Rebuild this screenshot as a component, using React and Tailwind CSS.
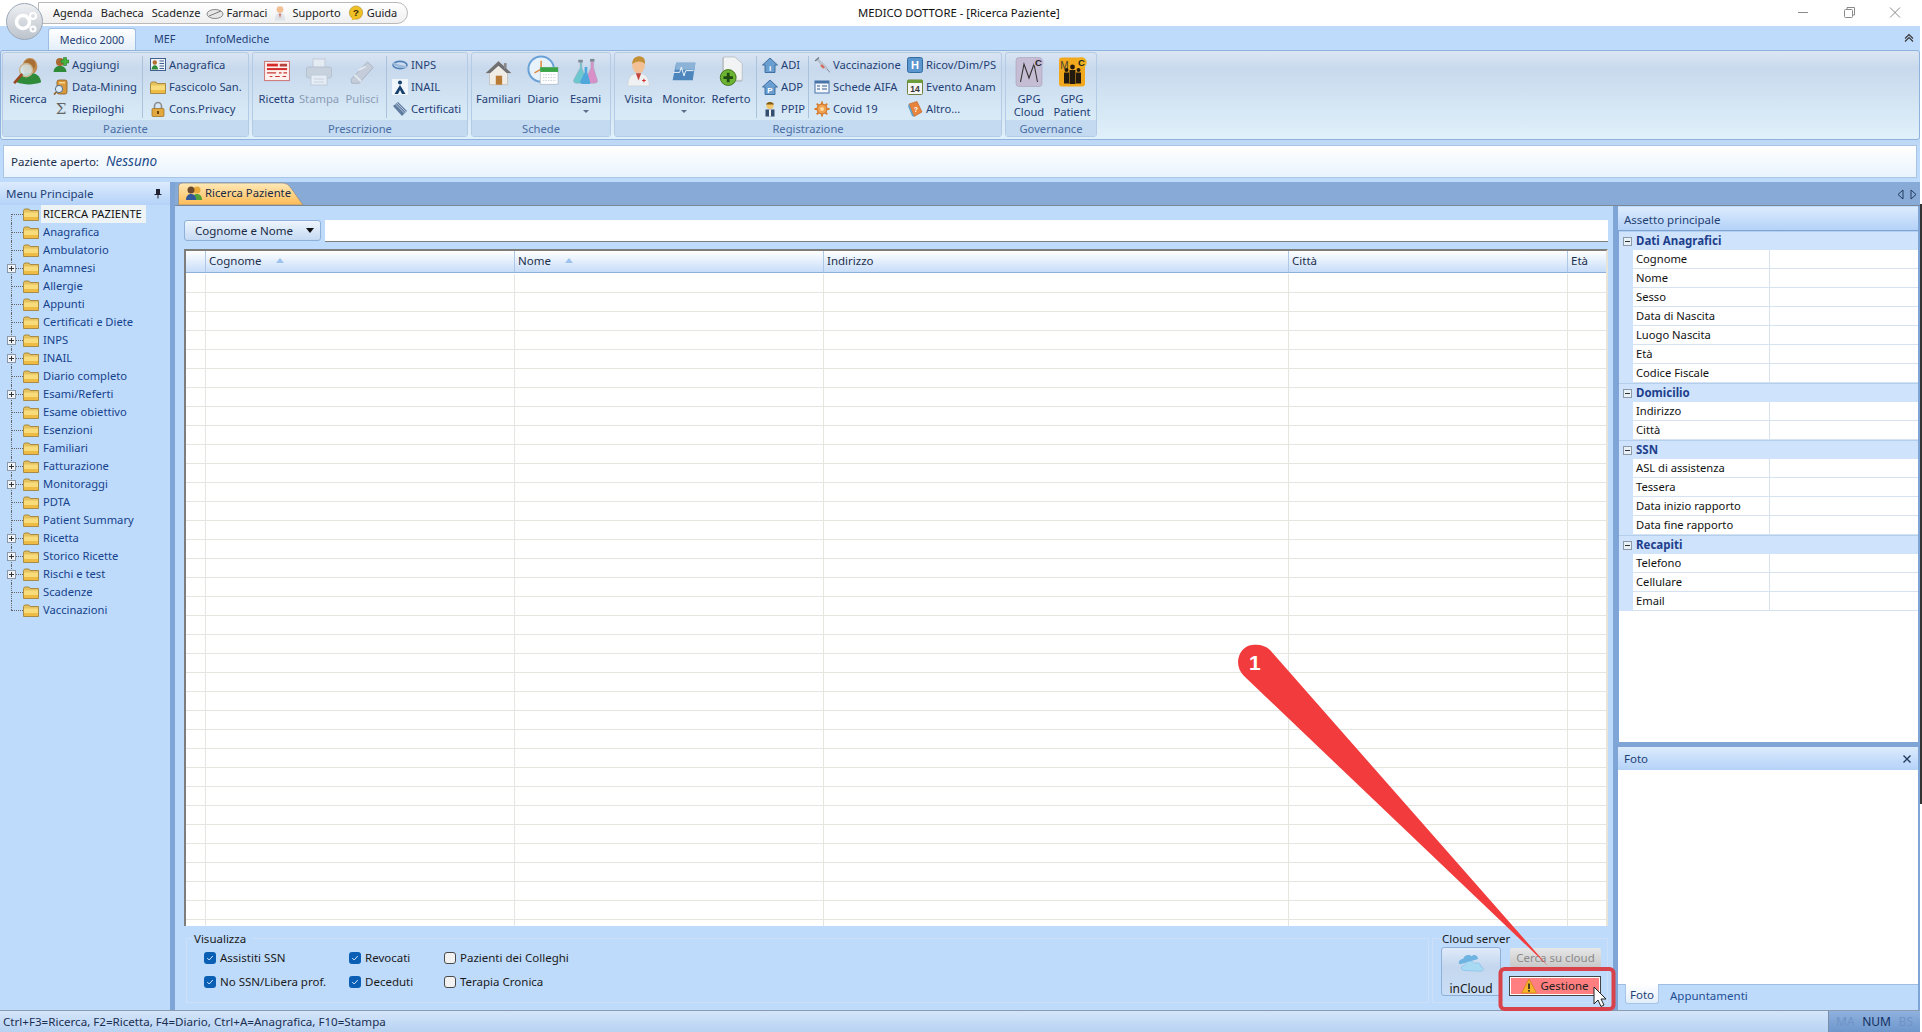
import React from "react";

const S = ({ w = 16, h = 16, vb, children, className = "" }) => (
  <svg width={w} height={h} viewBox={vb || `0 0 ${w} ${h}`} className={`shrink-0 ${className}`}>{children}</svg>
);

const Folder = ({ w = 16, h = 13 }) => (
  <S w={w} h={h} vb="0 0 16 13">
    <path d="M0.5 2.5 L1.5 1 H6 L7 2.5 H15.5 V12.5 H0.5 Z" fill="#e6c25e" stroke="#9c7a2c" strokeWidth="0.8" />
    <path d="M1 4.5 H15 V12 H1 Z" fill="#f8dc7c" />
    <path d="M1 9 H15 V12 H1 Z" fill="#eebc45" />
  </S>
);

const PersonHead = ({ c = "#a96b32", b = "#2f8a3a", x = 0 }) => (
  <g transform={`translate(${x} 0)`}>
    <circle cx="7" cy="5" r="4" fill={c} />
    <path d="M0.5 15 C1 10 4 9 7 9 C10 9 13 10 13.5 15 Z" fill={b} />
  </g>
);

const IcoRicerca = () => (
  <S w={30} h={30} vb="0 0 32 32">
    <ellipse cx="18" cy="10" rx="8" ry="9" fill="#c08a4e" />
    <ellipse cx="18" cy="8" rx="6" ry="6" fill="#a86f34" />
    <path d="M4 27 C6 18 12 17 18 17 C25 17 29 20 30 27 C22 30 12 30 4 27 Z" fill="#2f8a3a" />
    <circle cx="14" cy="14" r="7" fill="#d5e6ea" fillOpacity="0.85" stroke="#c9b48c" strokeWidth="1.6" />
    <path d="M9 19 L2 27" stroke="#9c4a22" strokeWidth="3" strokeLinecap="round" />
  </S>
);
const IcoAggiungi = () => (
  <S><PersonHead /><path d="M10.5 0.5 h3 v2.5 h2.5 v3 h-2.5 v2.5 h-3 v-2.5 h-2.5 v-3 h2.5 z" fill="#46b23e" stroke="#1d6a21" strokeWidth="0.5" /></S>
);
const IcoData = () => (
  <S>
    <rect x="4" y="1" width="10" height="14" rx="2" fill="#d99a3f" stroke="#8c5a1c" strokeWidth="0.8" />
    <rect x="6" y="3" width="6" height="1.5" fill="#f6d38e" />
    <circle cx="6" cy="10" r="3.6" fill="#dbeaf6" stroke="#55708f" />
    <path d="M3.5 13 L1 15.5" stroke="#8c5a1c" strokeWidth="1.6" />
  </S>
);
const IcoSigma = () => (
  <span className="w-[16px] text-center text-[15px] leading-none text-[#666] shrink-0" style={{ fontFamily: "'DejaVu Serif', serif" }}>Σ</span>
);
const IcoCard = () => (
  <S>
    <rect x="0.5" y="1.5" width="15" height="12" fill="#eef3fa" stroke="#3f5f8f" />
    <circle cx="4.8" cy="5.5" r="2.2" fill="#b26f2f" />
    <path d="M1.5 12.5 C2 9 3.5 8.2 4.8 8.2 C6.2 8.2 7.8 9 8 12.5 Z" fill="#2f8a3a" />
    <path d="M9.5 4 H14 M9.5 6.5 H14 M9.5 9 H14 M9.5 11.5 H14" stroke="#3f5f8f" />
  </S>
);
const IcoLock = () => (
  <S>
    <path d="M4.5 8 V5 a3.5 3.5 0 0 1 7 0 V8" fill="none" stroke="#8d8d8d" strokeWidth="1.6" />
    <rect x="2" y="7.5" width="12" height="8" rx="1" fill="#e3a93f" stroke="#9a6a1f" strokeWidth="0.7" />
    <rect x="7" y="10" width="2" height="3" fill="#6a4512" />
  </S>
);
const IcoRicetta = () => (
  <S w={28} h={22} vb="0 0 28 24">
    <rect x="0.5" y="1.5" width="27" height="21" fill="#fff2ee" stroke="#c9696a" />
    <rect x="3" y="4" width="12" height="3" fill="#d62a2a" />
    <path d="M17 4 h8 v3 h-8z M3 9 h22 v1 H3z" fill="#b4423f" />
    <rect x="3" y="9" width="22" height="2" fill="#d62a2a" />
    <path d="M3 14 h10 M16 14 h3 M21 14 h4 M6 18 h3 M12 18 h5 M20 18 h4" stroke="#c53636" strokeWidth="1.2" />
  </S>
);
const IcoPrinter = () => (
  <S w={28} h={30} className="opacity-70">
    <rect x="8" y="2" width="12" height="10" fill="#eef1f5" stroke="#bcc4cf" />
    <rect x="1.5" y="10" width="25" height="11" rx="2" fill="#c7cfd9" stroke="#aeb7c3" />
    <rect x="6" y="18" width="16" height="10" fill="#f1f4f8" stroke="#bcc4cf" />
    <path d="M9 22 H19 M9 25 H19" stroke="#c6ced8" />
  </S>
);
const IcoEraser = () => (
  <S w={26} h={28} vb="0 0 28 30">
    <path d="M20 3 L26 9 L11 26 L3 26 L2 22 Z" fill="#c4cdd9" stroke="#a9b3c0" />
    <path d="M6 17 L13 24 M10 12 L18 8" stroke="#e4e9f0" strokeWidth="2" />
  </S>
);
const IcoInps = () => (
  <S>
    <ellipse cx="8" cy="8" rx="7" ry="3.6" fill="none" stroke="#4f80b8" strokeWidth="1.6" />
    <path d="M1 6 C5 9 11 10 15 10" fill="none" stroke="#9bb9da" strokeWidth="2.2" />
  </S>
);
const IcoInail = () => (
  <S>
    <rect x="0" y="0" width="16" height="16" fill="#fff" fillOpacity="0.7" />
    <circle cx="8" cy="3.5" r="2" fill="#17406f" />
    <path d="M8 6 L13.5 15 H10 L8 11 L6 15 H2.5 Z" fill="#17406f" />
  </S>
);
const IcoCert = () => (
  <S>
    <path d="M1 5 L6 1 L15 10 L10 15 Z" fill="#5f7da1" />
    <path d="M3.5 3 L12.5 12 M5 2 L14 11" stroke="#cfdbe8" strokeWidth="0.8" />
  </S>
);
const IcoHouse = () => (
  <S w={27} h={28} vb="0 0 30 30">
    <path d="M15 2 L1 15 H5 V28 H25 V15 H29 Z" fill="#f0ece6" stroke="#b3aca2" strokeWidth="0.6" />
    <path d="M15 2 L1 15 H6 L15 7 L24 15 H29 Z" fill="#6e6f73" />
    <rect x="12" y="18" width="7" height="10" fill="#b97a35" />
    <rect x="21" y="4" width="3" height="6" fill="#8a8a8a" />
  </S>
);
const IcoClock = () => (
  <S w={32} h={32} vb="0 0 34 34">
    <circle cx="15" cy="15" r="13.5" fill="#e8f2fb" stroke="#6aa2d8" strokeWidth="2.2" />
    <path d="M15 6 V15 L8 19" stroke="#e08a3c" strokeWidth="1.6" fill="none" />
    <rect x="14" y="13" width="19" height="18" fill="#fff" stroke="#9aa8b6" strokeWidth="0.6" />
    <rect x="14" y="13" width="19" height="5" fill="#39a347" />
    <path d="M17 21 H31 M17 24 H31 M17 27 H31" stroke="#c2ccd6" strokeDasharray="1.5 1.2" />
  </S>
);
const IcoFlask = () => (
  <S w={29} h={27} vb="0 0 30 30">
    <path d="M9 5 V11 L2 24 C1 27 3 28 5 28 H13 C16 28 17 26 16 24 L11 11 V5 Z" fill="#6cc7cf" stroke="#9aa7b2" strokeWidth="0.5" />
    <path d="M21 4 V11 L15 24 C14 27 16 28 18 28 H25 C28 28 29 26 28 24 L24 11 V4 Z" fill="#d98fc7" stroke="#9aa7b2" strokeWidth="0.5" />
    <path d="M14 10 V16 L9 26 C9 28 11 29 13 29 H18 C20 29 21 28 20 26 L17 16 V10 Z" fill="#4fa7dc" />
    <rect x="7" y="2" width="5" height="3" fill="#7e8a94" />
    <rect x="20" y="1" width="5" height="3" fill="#7e8a94" />
  </S>
);
const IcoDoctor = () => (
  <S w={27} h={31} vb="0 0 30 34">
    <ellipse cx="15" cy="10" rx="7" ry="9" fill="#f3bf95" />
    <path d="M8 9 C8 2 12 0 16 0 C21 0 23 4 22 9 C20 5 12 5 8 9 Z" fill="#c39037" />
    <path d="M3 33 C3 22 9 19 15 19 C21 19 27 22 27 33 Z" fill="#eef0f2" stroke="#c4c8cc" strokeWidth="0.5" />
    <path d="M12 19 L15 27 L18 19 Z" fill="#c5463f" />
    <path d="M19 27 h4 M21 25 v4" stroke="#d22f2f" strokeWidth="1.2" />
  </S>
);
const IcoMonitor = () => (
  <S w={28} h={21} vb="0 0 28 24">
    <path d="M5 2 H27 L24 22 H1 Z" fill="#4c86bd" />
    <path d="M5 2 H27 L26 10 H4 Z" fill="#8ab3d7" />
    <path d="M2 13 H9 L11 7 L14 17 L16 11 H25" fill="none" stroke="#f2f7fb" strokeWidth="1.1" />
  </S>
);
const IcoReferto = () => (
  <S w={28} h={32} vb="0 0 30 34">
    <path d="M6 3 H18 L26 10 V28 H6 Z" fill="#dfe1e4" stroke="#a6a8ac" strokeWidth="0.6" />
    <path d="M3 1 H15 L23 8 V26 H3 Z" fill="#f2f3f5" stroke="#a6a8ac" strokeWidth="0.6" transform="translate(4 1)" />
    <circle cx="12" cy="24" r="8.5" fill="#6cb431" stroke="#406f1d" />
    <path d="M10.5 19 h3 v3.5 h3.5 v3 h-3.5 v3.5 h-3 v-3.5 h-3.5 v-3 h3.5 z" fill="#1f4a12" />
  </S>
);
const IcoHomeL = ({ l }) => (
  <S>
    <path d="M8 1 L0.5 8 H3 V15.5 H13 V8 H15.5 Z" fill="#6b9ed0" stroke="#2a5e93" strokeWidth="0.8" />
    <text x="8" y="14" textAnchor="middle" fontSize="8" fontWeight="700" fill="#fff" fontFamily="Liberation Sans">{l}</text>
  </S>
);
const IcoPpip = () => (
  <S>
    <circle cx="8" cy="4.5" r="3.6" fill="#f3c66b" />
    <path d="M4 3.5 C5 0 11 0 12 3.5 Z" fill="#7e5a14" />
    <rect x="3.5" y="8.5" width="9" height="7" fill="#354d6e" />
    <path d="M7 8.5 H9 V15.5 H7 Z" fill="#eef3f8" />
  </S>
);
const IcoSyringe = () => (
  <S>
    <path d="M3 2 L13 12" stroke="#b7c3cf" strokeWidth="3" />
    <path d="M13 12 L16 15.5" stroke="#6a7580" strokeWidth="0.8" />
    <path d="M1 4 L5 0.5" stroke="#6f7a86" strokeWidth="1.2" />
    <path d="M7 8 L10 11" stroke="#d96a5a" strokeWidth="2.4" />
  </S>
);
const IcoAifa = () => (
  <S>
    <rect x="1" y="2" width="14" height="12" fill="#f3f7fc" stroke="#4773a8" />
    <rect x="1" y="2" width="14" height="2.5" fill="#4773a8" />
    <path d="M3 7 H6 M3 10 H6 M8 7 H13 M8 10 H13" stroke="#36588a" strokeWidth="1.2" />
  </S>
);
const IcoCovid = () => (
  <S>
    <circle cx="8" cy="8" r="5" fill="#f0a24e" stroke="#c96c22" />
    <path d="M8 0.5 V3 M8 13 V15.5 M0.5 8 H3 M13 8 H15.5 M2.7 2.7 L4.5 4.5 M11.5 11.5 L13.3 13.3 M2.7 13.3 L4.5 11.5 M11.5 4.5 L13.3 2.7" stroke="#d97c2b" strokeWidth="1.8" />
    <circle cx="8" cy="8" r="2" fill="#fbd9a5" />
  </S>
);
const IcoH = () => (
  <S>
    <rect x="0.5" y="0.5" width="15" height="15" rx="2" fill="#5c96cf" stroke="#346c9f" />
    <text x="8" y="12" textAnchor="middle" fontSize="11" fontWeight="700" fill="#fff" fontFamily="Liberation Sans">H</text>
  </S>
);
const IcoCal = () => (
  <S>
    <rect x="0.5" y="1" width="15" height="14.5" rx="1" fill="#f5f6f4" stroke="#70803f" />
    <rect x="0.5" y="1" width="15" height="3" fill="#6e9c3b" />
    <text x="8" y="13" textAnchor="middle" fontSize="8.5" fontWeight="700" fill="#333" fontFamily="Liberation Sans">14</text>
  </S>
);
const IcoBook = () => (
  <S>
    <path d="M2 3 L10 0.5 L15 11 L7 15.5 Z" fill="#e8843c" stroke="#b95d20" strokeWidth="0.6" />
    <path d="M2 3 L7 15.5 L5 15 L1 5 Z" fill="#5fa2c9" />
    <text x="9" y="10.5" textAnchor="middle" fontSize="7" fontWeight="700" fill="#fff" fontFamily="Liberation Sans">?</text>
  </S>
);
const IcoGpgCloud = () => (
  <S w={29} h={30} vb="0 0 28 30">
    <rect x="0.5" y="0.5" width="26" height="29" rx="3" fill="#c5bdd3" stroke="#a79fb7" strokeWidth="0.6" />
    <path d="M5 25 L8.5 7 L13.5 21 L18.5 7 L22 25" fill="none" stroke="#333" strokeWidth="1.1" />
    <circle cx="23" cy="5.5" r="5" fill="#c2b9d1" />
    <text x="23" y="9" textAnchor="middle" fontSize="9.5" fontWeight="700" fill="#222" fontFamily="Liberation Sans">C</text>
  </S>
);
const IcoGpgPatient = () => (
  <S w={29} h={30} vb="0 0 28 30">
    <rect x="0.5" y="0.5" width="26" height="29" rx="3" fill="#f2a81d" />
    <text x="6" y="12" textAnchor="middle" fontSize="10" fill="#443" fontFamily="Liberation Sans">M</text>
    <circle cx="23" cy="5.5" r="5.2" fill="#eeb01f" />
    <text x="23" y="9" textAnchor="middle" fontSize="9.5" fontWeight="700" fill="#222" fontFamily="Liberation Sans">C</text>
    <g fill="#231a0f">
      <circle cx="8" cy="13" r="2" /><rect x="5.5" y="15.5" width="5" height="11" />
      <circle cx="20" cy="13" r="2" /><rect x="17.5" y="15.5" width="5" height="11" />
      <circle cx="14" cy="10" r="2.4" /><rect x="11" y="13" width="6" height="14" />
    </g>
  </S>
);
const Warn = ({ s = 16 }) => (
  <S w={s} h={s} vb="0 0 16 16">
    <path d="M8 1 L15.5 15 H0.5 Z" fill="#f7b32b" stroke="#c98310" strokeWidth="0.7" strokeLinejoin="round" />
    <rect x="7.2" y="5.5" width="1.6" height="5.5" fill="#222" />
    <rect x="7.2" y="12" width="1.6" height="1.6" fill="#222" />
  </S>
);
const IcoCloud = () => (
  <S w={30} h={21} vb="0 0 32 24">
    <path d="M2 13 C2 9 5 8 7 8 C8 3 14 2 17 5 C19 2 24 4 24 8 L4 14 Z" fill="#6fb3e3" />
    <path d="M8 21 C4 21 4 15 9 15 C10 10 17 9 20 13 C24 11 28 14 27 17 C31 17 31 22 27 22 Z" fill="#a8daf4" stroke="#6fb3e3" strokeWidth="0.5" />
  </S>
);

const Small = ({ icon, label, gray }) => (
  <div className="flex items-center gap-[3px] h-[22px] whitespace-nowrap">
    <span className="w-[16px] flex justify-center shrink-0">{icon}</span>
    <span className={gray ? "text-[#8b9db5]" : "text-[#1f3f75]"}>{label}</span>
  </div>
);
const Big = ({ icon, label, w, gray, caret, pb = "", lead = "leading-[15px]", mt = "mt-[4px]" }) => (
  <div className={`flex flex-col items-center shrink-0 ${w}`}>
    <div className={`h-[34px] flex items-end justify-center ${pb}`}>{icon}</div>
    <div className={`${mt} ${lead} text-center whitespace-pre-line ${gray ? "text-[#8b9db5]" : "text-[#1f3f75]"}`}>{label}</div>
    {caret && <div className="mt-[4px] w-0 h-0 border-x-[3px] border-x-transparent border-t-[3px] border-t-[#5a6e8a]" />}
  </div>
);
const Col = ({ children, w }) => <div className={`flex flex-col pt-[1px] shrink-0 ${w}`}>{children}</div>;
const Sep = ({ m = "mx-[3px]" }) => <div className={`w-px h-[62px] mt-[3px] bg-[#aac2dc] shrink-0 ${m}`} />;
const Group = ({ w, label, children }) => (
  <div className={`flex flex-col rounded-[3px] border border-[#b4cbe6] overflow-hidden shrink-0 h-[85px] ${w}`}>
    <div className="h-[67px] flex">{children}</div>
    <div className="h-[16px] bg-[#c3daf1] text-center leading-[18px] text-[#4a6ea3]">{label}</div>
  </div>
);

const menu = [
  ["RICERCA PAZIENTE", 0], ["Anagrafica", 0], ["Ambulatorio", 0], ["Anamnesi", 1], ["Allergie", 0], ["Appunti", 0],
  ["Certificati e Diete", 0], ["INPS", 1], ["INAIL", 1], ["Diario completo", 0], ["Esami/Referti", 1], ["Esame obiettivo", 0],
  ["Esenzioni", 0], ["Familiari", 0], ["Fatturazione", 1], ["Monitoraggi", 1], ["PDTA", 0], ["Patient Summary", 0],
  ["Ricetta", 1], ["Storico Ricette", 1], ["Rischi e test", 1], ["Scadenze", 0], ["Vaccinazioni", 0],
];

const MenuRow = ({ label, plus, idx, last }) => (
  <div className="h-[18px] flex items-center relative">
    <div className={`absolute left-[11px] w-0 border-l border-dotted border-[#666] ${idx === 0 ? "top-[9px] h-[9px]" : last ? "top-0 h-[9px]" : "top-0 h-[18px]"}`} />
    <div className="absolute left-[11px] w-[12px] top-[9px] border-t border-dotted border-[#666]" />
    {plus === 1 && (
      <div className="absolute left-[7px] top-[5px] w-[9px] h-[9px] border border-[#8d99a6] bg-[#f0f4f8] flex items-center justify-center">
        <div className="relative w-[5px] h-[5px]">
          <div className="absolute left-0 right-0 top-[2px] h-px bg-[#333]" />
          <div className="absolute top-0 bottom-0 left-[2px] w-px bg-[#333]" />
        </div>
      </div>
    )}
    <div className="ml-[23px] mr-[2px]"><Folder /></div>
    <div className={`pl-[2px] pr-[4px] leading-[18px] whitespace-nowrap text-[11.2px] ${idx === 0 ? "bg-[#eef3f6] text-[#111]" : "text-[#15428b]"}`}>{label}</div>
  </div>
);

const cols = [
  { w: "w-[20px]", t: "" }, { w: "w-[309px]", t: "Cognome", sort: 1 }, { w: "w-[309px]", t: "Nome", sort: 1 },
  { w: "w-[465px]", t: "Indirizzo" }, { w: "w-[279px]", t: "Città" }, { w: "w-[41px]", t: "Età" },
];

const Check = ({ on, label }) => (
  <div className="flex items-center gap-[4px] h-[24px] whitespace-nowrap text-[#1a1a1a]">
    {on ? (
      <div className="w-[12px] h-[12px] rounded-[3px] bg-[#0a5fb4] flex items-center justify-center">
        <svg width="8" height="8" viewBox="0 0 8 8"><path d="M1.2 4 L3.2 6 L6.8 2" fill="none" stroke="#cfe4fa" strokeWidth="1" /></svg>
      </div>
    ) : (
      <div className="w-[12px] h-[12px] rounded-[3px] bg-[#f2f2f2] border border-[#4a4a4a]" />
    )}
    <span>{label}</span>
  </div>
);

const props = [
  ["g", "Dati Anagrafici"], "Cognome", "Nome", "Sesso", "Data di Nascita", "Luogo Nascita", "Età", "Codice Fiscale",
  ["g", "Domicilio"], "Indirizzo", "Città",
  ["g", "SSN"], "ASL di assistenza", "Tessera", "Data inizio rapporto", "Data fine rapporto",
  ["g", "Recapiti"], "Telefono", "Cellulare", "Email",
];

export default function App() {
  return (
    <div className="relative w-[1922px] h-[1032px] overflow-hidden bg-white text-[11.5px] text-[#15428b]" style={{ fontFamily: "'Noto Sans', sans-serif" }}>
      <div className="w-[1920px] h-[1032px] flex flex-col">
        {/* title bar */}
        <div className="h-[26px] bg-white flex items-start shrink-0 relative">
          <div className="ml-[38px] mt-[2px] w-[370px] h-[22px] rounded-r-[11px] border border-[#b9b9b9] bg-linear-to-b from-white to-[#efefef] flex items-center pl-[14px] text-[#222] whitespace-nowrap text-[11px]">
            <span>Agenda</span><span className="ml-[8px]">Bacheca</span><span className="ml-[8px]">Scadenze</span>
            <span className="flex items-center gap-[2px] ml-[6px]">
              <S w={18} h={14}><ellipse cx="9" cy="8" rx="8" ry="4.5" fill="#e7e7e7" stroke="#8a8a8a" /><path d="M3 10 L15 5" stroke="#777" /></S>
              Farmaci
            </span>
            <span className="flex items-center gap-[6px] ml-[7px]">
              <S w={12} h={18} vb="0 0 14 18"><circle cx="7" cy="5" r="4" fill="#f3bf95" /><path d="M1 18 C1 11 4 9 7 9 C10 9 13 11 13 18 Z" fill="#dfe4e8" /><path d="M6 10 L7 15 L8 10 Z" fill="#c5463f" /></S>
              Supporto
            </span>
            <span className="flex items-center gap-[3px] ml-[7px]">
              <S w={16} h={17} vb="0 0 18 18"><circle cx="9" cy="8" r="7.5" fill="#eec025" stroke="#a77f10" strokeWidth="0.6" /><path d="M5 13 L4 17 L9 15 Z" fill="#eec025" /><text x="9" y="12" textAnchor="middle" fontSize="11" fontWeight="700" fill="#3a2a05" fontFamily="Liberation Sans">?</text></S>
              Guida
            </span>
          </div>
          <div className="absolute left-[858px] top-[4px] text-[11.3px] leading-[18px] text-[#111] whitespace-nowrap">MEDICO DOTTORE - [Ricerca Paziente]</div>
          <div className="ml-auto flex items-center h-[26px] text-[#888]">
            <S w={46} h={26}><path d="M18 12.5 H28" stroke="#8a8a8a" /></S>
            <S w={46} h={26}><rect x="18.5" y="9.5" width="8" height="8" rx="1" fill="none" stroke="#8a8a8a" /><path d="M21 9 V7.5 H28.5 V15 H27" fill="none" stroke="#8a8a8a" /></S>
            <S w={46} h={26}><path d="M18 7.5 L28 17.5 M28 7.5 L18 17.5" stroke="#8a8a8a" /></S>
            <div className="w-[2px]" />
          </div>
        </div>
        {/* tab strip */}
        <div className="h-[24px] bg-[#bfdbfb] flex items-end shrink-0 pl-[48px] text-[#1f3f75] relative text-[10.8px]">
          <div className="w-[88px] h-[22px] rounded-t-[3px] border border-b-0 border-[#9dbde2] bg-linear-to-b from-white to-[#e4eef9] text-center leading-[21px]">Medico 2000</div>
          <div className="ml-[18px] h-[22px] leading-[21px]">MEF</div>
          <div className="ml-[30px] h-[22px] leading-[21px]">InfoMediche</div>
          <div className="ml-auto mr-[6px] self-center">
            <S w={10} h={10}><path d="M1 5.5 L5 1.5 L9 5.5 M1 8.5 L5 4.5 L9 8.5" fill="none" stroke="#333" strokeWidth="1.1" /></S>
          </div>
        </div>
        {/* ribbon */}
        <div className="h-[90px] shrink-0 bg-[#bfdbfb]">
          <div className="h-[90px] rounded-[3px] border border-[#8fb3dd] bg-linear-to-b from-[#dbe6f3] via-[#c8d9ed] via-20% to-[#e0f1fb] flex gap-[3px] pl-[1px] pt-[1px] text-[11.2px]">
            <Group w="w-[247px]" label="Paziente">
              <Big w="w-[50px]" icon={<IcoRicerca />} label="Ricerca" />
              <Col w="w-[86px]">
                <Small icon={<IcoAggiungi />} label="Aggiungi" />
                <Small icon={<IcoData />} label="Data-Mining" />
                <Small icon={<IcoSigma />} label="Riepiloghi" />
              </Col>
              <Sep />
              <Col w="w-[96px] pl-[4px]">
                <Small icon={<IcoCard />} label="Anagrafica" />
                <Small icon={<Folder />} label="Fascicolo San." />
                <Small icon={<IcoLock />} label="Cons.Privacy" />
              </Col>
            </Group>
            <Group w="w-[216px]" label="Prescrizione">
              <Big w="w-[47px]" pb="pb-[5px]" icon={<IcoRicetta />} label="Ricetta" />
              <Big w="w-[38px]" gray icon={<IcoPrinter />} label="Stampa" />
              <Big w="w-[48px]" gray icon={<IcoEraser />} label="Pulisci" />
              <Sep m="" />
              <Col w="w-[78px] pl-[5px]">
                <Small icon={<IcoInps />} label="INPS" />
                <Small icon={<IcoInail />} label="INAIL" />
                <Small icon={<IcoCert />} label="Certificati" />
              </Col>
            </Group>
            <Group w="w-[140px]" label="Schede">
              <Big w="w-[53px]" icon={<IcoHouse />} label="Familiari" />
              <Big w="w-[36px]" icon={<IcoClock />} label="Diario" />
              <Big w="w-[49px]" caret pb="pb-[2px]" icon={<IcoFlask />} label="Esami" />
            </Group>
            <Group w="w-[388px]" label="Registrazione">
              <Big w="w-[47px]" icon={<IcoDoctor />} label="Visita" />
              <Big w="w-[44px]" caret pb="pb-[5px]" icon={<IcoMonitor />} label="Monitor." />
              <Big w="w-[50px]" icon={<IcoReferto />} label="Referto" />
              <Sep m="" />
              <Col w="w-[51px] pl-[5px]">
                <Small icon={<IcoHomeL l="i" />} label="ADI" />
                <Small icon={<IcoHomeL l="P" />} label="ADP" />
                <Small icon={<IcoPpip />} label="PPIP" />
              </Col>
              <Sep m="" />
              <Col w="w-[98px] pl-[5px]">
                <Small icon={<IcoSyringe />} label="Vaccinazione" />
                <Small icon={<IcoAifa />} label="Schede AIFA" />
                <Small icon={<IcoCovid />} label="Covid 19" />
              </Col>
              <Col w="w-[90px]">
                <Small icon={<IcoH />} label="Ricov/Dim/PS" />
                <Small icon={<IcoCal />} label="Evento Anam" />
                <Small icon={<IcoBook />} label="Altro..." />
              </Col>
            </Group>
            <Group w="w-[92px]" label="Governance">
              <Big w="w-[46px]" lead="leading-[13px]" mt="mt-[5px]" icon={<IcoGpgCloud />} label={"GPG\nCloud"} />
              <Big w="w-[40px]" lead="leading-[13px]" mt="mt-[5px]" icon={<IcoGpgPatient />} label={"GPG\nPatient"} />
            </Group>
          </div>
        </div>
        <div className="h-[5px] shrink-0 bg-[#bfd8f6]" />
        {/* patient bar */}
        <div className="h-[33px] shrink-0 bg-[#bfdbfb] px-[3px]">
          <div className="h-[33px] border border-[#a9c5e6] bg-linear-to-b from-white to-[#e9f4fd] flex items-center pl-[7px] text-[#1d2f4c]">
            <span>Paziente aperto:</span>
            <span className="ml-[7px] italic text-[13.5px] text-[#1e4b8c]">Nessuno</span>
          </div>
        </div>
        <div className="h-[4px] shrink-0 bg-[#bfdbfb]" />
        {/* body */}
        <div className="flex h-[828px] shrink-0">
          <div className="w-[170px] shrink-0 bg-[#bfdbfb] flex flex-col">
            <div className="h-[23px] bg-linear-to-b from-[#dcebfd] to-[#b4d2f8] flex items-center pl-[6px] pr-[7px] text-[#1f3f75]">
              <span>Menu Principale</span>
              <S w={10} h={11} className="ml-auto"><path d="M3 1 H7 V6 H8.5 V7 H5.5 V10.5 H4.5 V7 H1.5 V6 H3 Z" fill="#223" /></S>
            </div>
            <div>
              {menu.map(([l, p], i) => <MenuRow key={l} label={l} plus={p} idx={i} last={i === menu.length - 1} />)}
            </div>
          </div>
          <div className="w-[5px] shrink-0 bg-[#7ea5d6]" />
          <div className="flex-1 flex flex-col min-w-0">
            {/* doc tabs */}
            <div className="h-[24px] shrink-0 bg-[#88aad6] flex items-end pl-[3px] border-b border-[#7b8797]">
              <div className="relative w-[129px] h-[23px] flex items-center pl-[8px] gap-[3px] text-[#1a2a44] text-[11.3px]">
                <svg width="129" height="23" viewBox="0 0 129 23" className="absolute left-0 top-0">
                  <defs><linearGradient id="t" x1="0" x2="0" y1="0" y2="1"><stop offset="0" stopColor="#ffe9b8" /><stop offset="1" stopColor="#fdbb55" /></linearGradient></defs>
                  <path d="M0.5 23 V5 Q0.5 1 5 1 H105 Q110 1 113 6 L125 23 Z" fill="url(#t)" stroke="#8f8f8f" strokeWidth="0.8" />
                </svg>
                <S w={16} h={15} className="relative">
                  <circle cx="11" cy="4" r="3.5" fill="#e8a93a" /><path d="M6 14 C6 9 9 8 11 8 C13 8 16 9 16 14 Z" fill="#53a13a" />
                  <circle cx="5" cy="4" r="3.5" fill="#6e4a2c" /><path d="M0 14 C0 9 3 8 5 8 C7 8 10 9 10 14 Z" fill="#31569a" />
                </S>
                <span className="relative whitespace-nowrap">Ricerca Paziente</span>
              </div>
              <div className="ml-auto mr-[3px] mb-[5px] flex gap-[6px]">
                <S w={7} h={11}><path d="M6 1 L1 5.5 L6 10 Z" fill="none" stroke="#223a5e" /></S>
                <S w={7} h={11}><path d="M1 1 L6 5.5 L1 10 Z" fill="none" stroke="#223a5e" /></S>
              </div>
            </div>
            <div className="flex-1 bg-[#bfdbfb] flex min-h-0">
              <div className="w-[1438px] shrink-0 pl-[9px] flex flex-col">
                <div className="h-[22px] mt-[14px] flex shrink-0">
                  <div className="w-[137px] h-[21px] rounded-[3px] border border-[#8fb0d8] bg-linear-to-b from-[#eef5fd] to-[#c5daf3] flex items-center pl-[10px] text-[#1a2a44]">
                    Cognome e Nome
                    <span className="ml-[13px] w-0 h-0 border-x-[4.5px] border-x-transparent border-t-[5px] border-t-[#111]" />
                  </div>
                  <div className="ml-[4px] w-[1283px] h-[22px] bg-white border-b border-[#7d7d7d]" />
                </div>
                <div className="mt-[7px] w-[1424px] h-[677px] shrink-0 bg-white border-t-2 border-l-2 border-[#7d7d7d] border-r-2 border-r-[#e8e4d8] overflow-hidden">
                  <div className="flex h-[22px] bg-linear-to-b from-white to-[#c7ddf8] border-b border-[#8fb0d8] text-[#1d2f4c] box-border">
                    {cols.map((c, i) => (
                      <div key={i} className={`h-[21px] border-r border-[#aec7e6] flex items-center pl-[3px] pb-[2px] shrink-0 box-border ${c.w}`}>
                        {c.t}
                        {c.sort && <span className="ml-[14px] w-0 h-0 border-x-[4px] border-x-transparent border-b-[5px] border-b-[#9dc3ec]" />}
                      </div>
                    ))}
                  </div>
                  <div className="h-px" />
                  {Array.from({ length: 35 }).map((_, r) => (
                    <div key={r} className="flex h-[19px]">
                      {cols.map((c, i) => <div key={i} className={`h-[19px] border-r border-b border-[#e6e6e0] shrink-0 box-border ${c.w}`} />)}
                    </div>
                  ))}
                </div>
                {/* bottom filters */}
                <div className="flex mt-[12px] w-[1424px] text-[#1a1a1a]">
                  <div className="relative ml-[2px] w-[1243px] h-[65px] border border-[#cde0f8]">
                    <div className="absolute left-[6px] -top-[8px] bg-[#bfdbfb] leading-[16px] px-[1px] pr-[6px]">Visualizza</div>
                    <div className="flex pt-[7px] pl-[17px]">
                      <div className="w-[145px]"><Check on label="Assistiti SSN" /><Check on label="No SSN/Libera prof." /></div>
                      <div className="w-[95px]"><Check on label="Revocati" /><Check on label="Deceduti" /></div>
                      <div><Check label="Pazienti dei Colleghi" /><Check label="Terapia Cronica" /></div>
                    </div>
                  </div>
                  <div className="relative ml-[3px] w-[176px] h-[65px] border border-[#cde0f8]">
                    <div className="absolute left-[8px] -top-[8px] bg-[#bfdbfb] leading-[16px] px-[1px] whitespace-nowrap">Cloud server</div>
                    <div className="flex pt-[8px] pl-[8px]">
                      <div className="w-[60px] h-[49px] rounded-[3px] border border-[#8fb0d8] bg-linear-to-b from-[#dfeafa] via-[#c4d7ee] via-40% to-[#c9def6] flex flex-col items-center justify-between pt-[4px]">
                        <IcoCloud />
                        <span className="h-[12px] leading-[12px] text-[12px] text-[#1a1a1a]">inCloud</span>
                      </div>
                      <div className="ml-[8px] flex flex-col">
                        <div className="mt-[1px] ml-[1px] w-[91px] h-[19px] bg-linear-to-b from-[#e7e7e7] to-[#c9c9c9] rounded-[2px] text-center leading-[19px] text-[#8a8a8a] whitespace-nowrap">Cerca su cloud</div>
                        <div className="mt-[9px] w-[92px] h-[20px] border border-[#444] outline outline-1 outline-white -outline-offset-2 bg-[#ff7f80] flex items-center justify-center gap-[3px] text-[#222]">
                          <Warn />Gestione
                        </div>
                      </div>
                    </div>
                  </div>
                </div>
              </div>
              <div className="w-[5px] shrink-0 bg-[#7ea5d6]" />
              {/* right column */}
              <div className="flex-1 min-w-0 flex flex-col border-r-2 border-[#7ea5d6]">
                <div className="h-[23px] mt-[1px] pt-[2px] box-border shrink-0 bg-linear-to-b from-[#dcebfd] to-[#b4d2f8] flex items-center pl-[6px] text-[#1f3f75]">Assetto principale</div>
                <div className="h-[512px] shrink-0 bg-white border-t border-l border-[#7ea5d6]">
                  {props.map((p, i) =>
                    Array.isArray(p) ? (
                      <div key={i} className="h-[19px] bg-[#cfe3fc] flex items-center font-bold text-[#1e3f8c] border-t border-[#b4cfee] box-border">
                        <div className="ml-[4px] w-[9px] h-[9px] border border-[#8d99a6] bg-[#e8f0f8] flex items-center justify-center">
                          <div className="w-[5px] h-px bg-[#333]" />
                        </div>
                        <span className="ml-[4px]">{p[1]}</span>
                      </div>
                    ) : (
                      <div key={i} className="h-[19px] flex">
                        <div className="w-[14px] bg-[#cfe3fc] shrink-0" />
                        <div className="w-[137px] pl-[3px] leading-[18px] border-b border-r border-[#d6e2f0] text-[#111] box-border text-[11.2px]">{p}</div>
                        <div className="flex-1 border-b border-[#d6e2f0]" />
                      </div>
                    )
                  )}
                </div>
                <div className="h-[5px] shrink-0 bg-[#7ea5d6]" />
                <div className="h-[23px] shrink-0 bg-linear-to-b from-[#dcebfd] to-[#b4d2f8] flex items-center pl-[6px] pr-[6px] text-[#1f3f75]">
                  Foto
                  <S w={10} h={10} className="ml-auto"><path d="M1.5 1.5 L8.5 8.5 M8.5 1.5 L1.5 8.5" stroke="#223a5e" strokeWidth="1.4" /></S>
                </div>
                <div className="h-[214px] shrink-0 bg-white" />
                <div className="h-[23px] shrink-0 bg-[#bfdbfb] flex items-start pl-[7px] border-t border-[#9dbde2] box-border">
                  <div className="w-[34px] h-[20px] -mt-px rounded-b-[3px] border border-t-0 border-[#a8c4e6] bg-linear-to-b from-white to-[#e3eefa] text-center leading-[21px] text-[#1f3f75]">Foto</div>
                  <div className="ml-[11px] leading-[21px] text-[#1f4f95]">Appuntamenti</div>
                </div>
              </div>
            </div>
          </div>
        </div>
        {/* status bar */}
        <div className="h-[22px] shrink-0 border-t border-[#8b9bb0] bg-linear-to-b from-[#d4e5fa] to-[#b7d2f2] flex items-center pl-[3px] text-[#1a2f52]">
          <span className="text-[11.6px]">Ctrl+F3=Ricerca, F2=Ricetta, F4=Diario, Ctrl+A=Anagrafica, F10=Stampa</span>
          <div className="ml-auto w-[92px] h-[21px] bg-linear-to-b from-[#8fb1de] to-[#6e97cc] flex items-center justify-between px-[7px] border-l border-[#7a8ea8] text-[12px]">
            <span className="text-[#6f93c6]">MA</span>
            <span className="text-[#12305f]">NUM</span>
            <span className="text-[#6f93c6]">BS</span>
          </div>
        </div>
      </div>

      {/* orb over the title and tab rows */}
      <div className="absolute left-[6px] top-[3px] w-[37px] h-[37px] rounded-full border border-[#9aa8b8] bg-linear-to-b from-[#eef0f3] to-[#bcc3cb] flex items-center justify-center">
        <S w={26} h={26}>
          <circle cx="11" cy="13" r="6.5" fill="none" stroke="#fff" strokeWidth="3.5" />
          <circle cx="21" cy="7" r="3" fill="none" stroke="#fff" strokeWidth="2" />
          <circle cx="21" cy="20" r="2.5" fill="none" stroke="#fff" strokeWidth="2" />
        </S>
      </div>
      {/* window edge */}
      <div className="absolute left-[1920px] top-[204px] w-[2px] h-[600px] bg-[#333]" />

      {/* annotation over the page */}
      <svg width="1922" height="1032" className="absolute left-0 top-0 pointer-events-none">
        <path d="M1270 650 L1548 966 L1244 676 C1232 664 1240 646 1252 645 C1260 644 1266 646 1270 650 Z" fill="#f23b3c" />
        <rect x="1500.5" y="969" width="113" height="40" rx="4" fill="none" stroke="#d8434b" strokeWidth="4" />
        <path d="M1594 987 V1004 L1598 1000 L1601 1006.5 L1604 1005 L1601 999 L1606 999 Z" fill="#fff" stroke="#222" strokeWidth="1" />
      </svg>
      <div className="absolute left-[1249px] top-[650px] text-white font-bold text-[21px] leading-[26px] pointer-events-none" style={{ fontFamily: "'Liberation Sans', sans-serif" }}>1</div>
    </div>
  );
}
